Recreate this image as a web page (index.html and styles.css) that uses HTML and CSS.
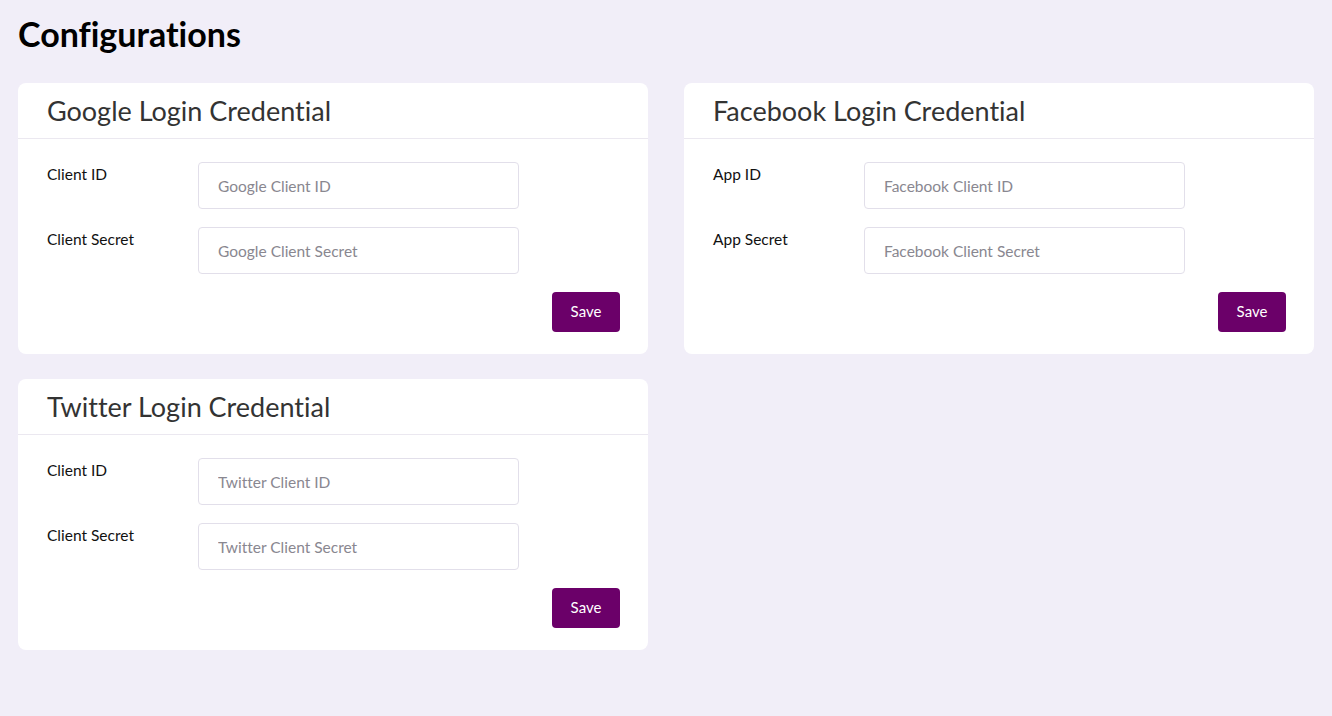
FILE: index.html
```html
<!DOCTYPE html>
<html>
<head>
<meta charset="utf-8">
<link rel="stylesheet" href="styles.css">
</head>
<body>
<div class="page">
  <h1 class="page-title">Configurations</h1>
  <div class="grid">
    <div class="card">
      <div class="card-header">Google Login Credential</div>
      <div class="card-body">
        <div class="row"><label class="label">Client ID</label><input class="input" placeholder="Google Client ID"></div>
        <div class="row"><label class="label">Client Secret</label><input class="input" placeholder="Google Client Secret"></div>
        <div class="actions"><button class="btn">Save</button></div>
      </div>
    </div>
    <div class="card">
      <div class="card-header">Facebook Login Credential</div>
      <div class="card-body">
        <div class="row"><label class="label">App ID</label><input class="input" placeholder="Facebook Client ID"></div>
        <div class="row"><label class="label">App Secret</label><input class="input" placeholder="Facebook Client Secret"></div>
        <div class="actions"><button class="btn">Save</button></div>
      </div>
    </div>
    <div class="card">
      <div class="card-header">Twitter Login Credential</div>
      <div class="card-body">
        <div class="row"><label class="label">Client ID</label><input class="input" placeholder="Twitter Client ID"></div>
        <div class="row"><label class="label">Client Secret</label><input class="input" placeholder="Twitter Client Secret"></div>
        <div class="actions"><button class="btn">Save</button></div>
      </div>
    </div>
  </div>
</div>
</body>
</html>
```

FILE: styles.css
```css
html, body {
  margin: 0;
  padding: 0;
  background: #f1eef8;
  font-family: Lato, "Liberation Sans", sans-serif;
  font-variant-ligatures: none;
}
.page {
  padding: 14px 18px 18px 18px;
}
.page-title {
  margin: 0 0 29px 0;
  font-size: 34px;
  font-weight: 700;
  color: #000;
  line-height: 40px;
}
.grid {
  display: grid;
  grid-template-columns: 630px 630px;
  column-gap: 36px;
  row-gap: 25px;
  align-items: start;
}
.card {
  background: #fff;
  border-radius: 8px;
}
.card-header {
  height: 56px;
  box-sizing: border-box;
  padding: 12px 29px 0 29px;
  font-size: 27px;
  color: #333;
  line-height: 32px;
  border-bottom: 1px solid #ebe8f0;
}
.card-body {
  padding: 23px 28px 22px 29px;
}
.row {
  display: flex;
  align-items: flex-start;
  margin-bottom: 18px;
}
.label {
  width: 151px;
  font-size: 15.5px;
  line-height: 24px;
  color: #111;
}
.input {
  width: 321px;
  height: 47px;
  box-sizing: border-box;
  border: 1px solid #e2dfea;
  border-radius: 4px;
  padding: 0 19px;
  font-family: Lato, "Liberation Sans", sans-serif;
  font-variant-ligatures: none;
  font-size: 15.5px;
  color: #333;
  outline: none;
}
.input::placeholder {
  color: #898790;
}
.actions {
  display: flex;
  justify-content: flex-end;
}
.btn {
  width: 68px;
  height: 40px;
  border: none;
  border-radius: 4px;
  background: #6b0069;
  color: #fff;
  font-family: Lato, "Liberation Sans", sans-serif;
  font-variant-ligatures: none;
  font-size: 15px;
  padding: 0 0 2px 0;
  cursor: pointer;
}
```
